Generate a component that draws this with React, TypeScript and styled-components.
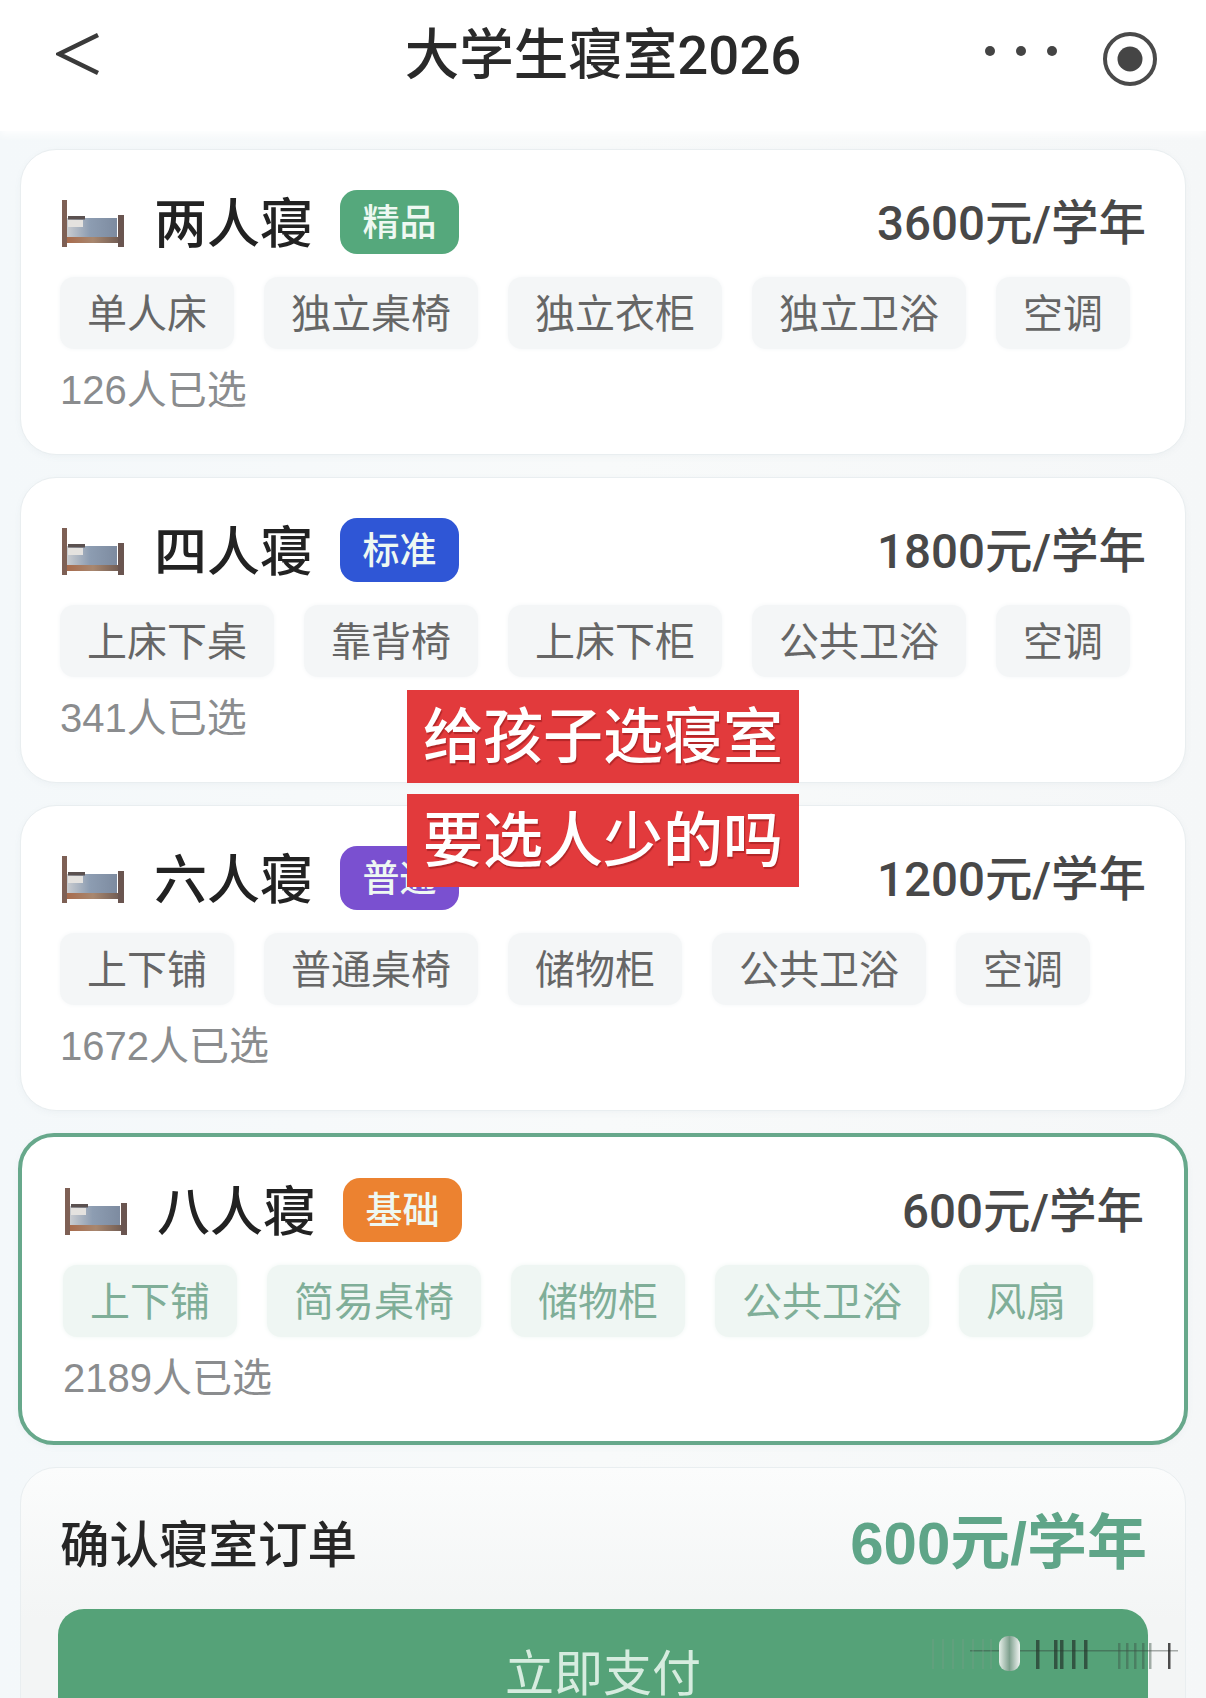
import React from "react";
import styled, { createGlobalStyle } from "styled-components";

const GlobalStyle = createGlobalStyle`
  html, body {
    margin: 0;
    padding: 0;
    background: #f6f9fa;
  }
  body {
    font-family: "Liberation Sans", "Noto Sans CJK SC", sans-serif;
  }
`;

type Room = {
  name: string;
  tag: string;
  tagColor: string;
  price: string;
  features: string[];
  count: string;
  selected?: boolean;
};

const rooms: Room[] = [
  {
    name: "两人寝",
    tag: "精品",
    tagColor: "#55a87c",
    price: "3600元/学年",
    features: ["单人床", "独立桌椅", "独立衣柜", "独立卫浴", "空调"],
    count: "126人已选",
  },
  {
    name: "四人寝",
    tag: "标准",
    tagColor: "#2f56d6",
    price: "1800元/学年",
    features: ["上床下桌", "靠背椅", "上床下柜", "公共卫浴", "空调"],
    count: "341人已选",
  },
  {
    name: "六人寝",
    tag: "普通",
    tagColor: "#7a50d0",
    price: "1200元/学年",
    features: ["上下铺", "普通桌椅", "储物柜", "公共卫浴", "空调"],
    count: "1672人已选",
  },
  {
    name: "八人寝",
    tag: "基础",
    tagColor: "#ec8230",
    price: "600元/学年",
    features: ["上下铺", "简易桌椅", "储物柜", "公共卫浴", "风扇"],
    count: "2189人已选",
    selected: true,
  },
];

const BedIcon = () => (
  <BedSvg viewBox="0 0 66 50" aria-hidden="true">
    <defs>
      <linearGradient id="mattress" x1="0" y1="0" x2="1" y2="0">
        <stop offset="0" stopColor="#c9ccd0" />
        <stop offset="0.45" stopColor="#8d9db2" />
        <stop offset="1" stopColor="#7d8ba0" />
      </linearGradient>
      <linearGradient id="frame" x1="0" y1="0" x2="1" y2="0">
        <stop offset="0" stopColor="#a8694a" />
        <stop offset="0.5" stopColor="#a8876f" />
        <stop offset="1" stopColor="#6e5a52" />
      </linearGradient>
    </defs>
    <rect x="7" y="20" width="50" height="21" fill="url(#mattress)" />
    <rect x="8" y="18" width="17" height="3.5" fill="#5b5150" />
    <rect x="8" y="22" width="15" height="7" fill="#e4e2df" />
    <rect x="5" y="39" width="56" height="6" fill="url(#frame)" />
    <rect x="2" y="2" width="5" height="47" fill="#7e6055" />
    <rect x="58" y="17" width="6" height="32" fill="#6a5550" />
  </BedSvg>
);

const RoomCard = ({ room }: { room: Room }) => (
  <Card $selected={room.selected}>
    <CardTop>
      <BedIcon />
      <RoomName>{room.name}</RoomName>
      <Tag $color={room.tagColor}>{room.tag}</Tag>
      <Price>{room.price}</Price>
    </CardTop>
    <Chips>
      {room.features.map((feature) => (
        <Chip key={feature} $selected={room.selected}>
          {feature}
        </Chip>
      ))}
    </Chips>
    <Count>{room.count}</Count>
  </Card>
);

const App = () => {
  return (
    <Page>
      <GlobalStyle />
      <Header>
        <BackIcon viewBox="0 0 44 44" aria-hidden="true">
          <path d="M42 2 L3 21 L42 40" />
        </BackIcon>
        <Title>大学生寝室2026</Title>
        <HeaderActions>
          <Dots>
            <Dot />
            <Dot />
            <Dot />
          </Dots>
          <RecordIcon viewBox="0 0 56 56" aria-hidden="true">
            <circle cx="28" cy="28" r="25" fill="none" stroke="#4a4a4a" strokeWidth="4" />
            <circle cx="28" cy="28" r="12.5" fill="#454545" />
          </RecordIcon>
        </HeaderActions>
      </Header>
      <List>
        {rooms.map((room) => (
          <RoomCard key={room.name} room={room} />
        ))}
        <OrderCard>
          <OrderRow>
            <OrderTitle>确认寝室订单</OrderTitle>
            <OrderPrice>600元/学年</OrderPrice>
          </OrderRow>
          <PayButton>立即支付</PayButton>
        </OrderCard>
      </List>
      <Caption>
        <CaptionLine>给孩子选寝室</CaptionLine>
        <CaptionLine>要选人少的吗</CaptionLine>
      </Caption>
      <Watermark viewBox="0 0 250 40" aria-hidden="true">
        <defs>
          <linearGradient id="pill" x1="0" y1="0" x2="1" y2="0">
            <stop offset="0" stopColor="#e6efe9" />
            <stop offset="0.5" stopColor="#7fa08e" />
            <stop offset="1" stopColor="#f0f4f2" />
          </linearGradient>
        </defs>
        <rect x="40" y="15" width="208" height="1.5" fill="#2f3a34" opacity="0.4" />
        {[2, 12, 22, 32, 42, 52, 60].map((x) => (
          <rect key={x} x={x} y="4" width="2" height="30" fill="#7f9a8a" opacity="0.3" />
        ))}
        <rect x="69" y="1" width="21" height="35" rx="9" fill="url(#pill)" />
        {[106, 124, 130, 142, 154].map((x) => (
          <rect key={x} x={x} y="5" width="3.5" height="29" fill="#24352b" opacity="0.7" />
        ))}
        {[188, 196, 204, 212, 219].map((x) => (
          <rect key={x} x={x} y="8" width="2.5" height="26" fill="#3f5548" opacity="0.45" />
        ))}
        <rect x="238" y="8" width="2.5" height="26" fill="#222" opacity="0.8" />
      </Watermark>
    </Page>
  );
};

export default App;

const Page = styled.div`
  position: relative;
  width: 1206px;
  height: 1698px;
  overflow: hidden;
  background: linear-gradient(90deg, #f4f8fa, #f8fafa 50%, #f5f7f8);
`;

const Header = styled.header`
  height: 131px;
  box-sizing: border-box;
  padding: 31px 48px 0 56px;
  background: #fff;
  box-shadow: 0 4px 8px rgba(255, 255, 255, 0.9);
  display: flex;
  align-items: flex-start;
  justify-content: space-between;
`;

const BackIcon = styled.svg`
  width: 44px;
  height: 44px;
  margin-top: 2px;
  fill: none;
  stroke: #3a3a3a;
  stroke-width: 4.5;
`;

const Title = styled.h1`
  position: absolute;
  left: 0;
  right: 0;
  top: 20px;
  margin: 0;
  text-align: center;
  font-family: Roboto, "Noto Sans CJK SC", sans-serif;
  font-size: 54.5px;
  line-height: 70px;
  font-weight: 500;
  color: #2a2a2a;
`;

const HeaderActions = styled.div`
  display: flex;
  align-items: flex-start;
  gap: 45px;
`;

const Dots = styled.div`
  display: flex;
  gap: 21px;
  margin-top: 15px;
`;

const Dot = styled.span`
  width: 10px;
  height: 10px;
  border-radius: 50%;
  background: #444;
`;

const RecordIcon = styled.svg`
  width: 56px;
  height: 56px;
`;

const List = styled.main`
  display: flex;
  flex-direction: column;
  gap: 22px;
  padding: 18px 20px 0 20px;
`;

const Card = styled.section<{ $selected?: boolean }>`
  height: ${(p) => (p.$selected ? 312 : 306)}px;
  box-sizing: border-box;
  margin: 0 ${(p) => (p.$selected ? "-2px" : "0")};
  padding: ${(p) => (p.$selected ? "41px 40px 0 41px" : "40px 39px 0 39px")};
  border: ${(p) => (p.$selected ? "4px solid #67a88b" : "1px solid #e9eef0")};
  border-radius: 36px;
  background: #fff;
  box-shadow: 0 2px 6px rgba(120, 140, 150, 0.06);
`;

const CardTop = styled.div`
  display: flex;
  align-items: center;
  height: 64px;
`;

const BedSvg = styled.svg`
  width: 66px;
  height: 50px;
  margin-top: 2px;
  flex: none;
  filter: blur(0.7px);
`;

const RoomName = styled.span`
  margin-left: 28px;
  padding-bottom: 5px;
  font-size: 53px;
  font-weight: 500;
  color: #222;
`;

const Tag = styled.span<{ $color: string }>`
  margin-left: 27px;
  width: 119px;
  height: 64px;
  border-radius: 17px;
  background: ${(p) => p.$color};
  color: #eef8f2;
  font-size: 37px;
  font-weight: 500;
  line-height: 68px;
  text-align: center;
`;

const Price = styled.span`
  margin-left: auto;
  padding-bottom: 5px;
  font-family: Roboto, "Noto Sans CJK SC", sans-serif;
  font-size: 47.5px;
  font-weight: 500;
  color: #484848;
`;

const Chips = styled.div`
  display: flex;
  gap: 30px;
  margin-top: 23px;
`;

const Chip = styled.span<{ $selected?: boolean }>`
  height: 72px;
  padding: 0 27px;
  border-radius: 14px;
  background: ${(p) => (p.$selected ? "#eff6f3" : "#f4f6f7")};
  box-shadow: 0 0 5px ${(p) => (p.$selected ? "#eff6f3" : "#f4f6f7")};
  color: ${(p) => (p.$selected ? "#7fae98" : "#666")};
  font-size: 40px;
  line-height: 74px;
`;

const Count = styled.div`
  margin-top: 16px;
  font-size: 40px;
  line-height: 50px;
  color: #8a8c8e;
`;

const OrderCard = styled.section`
  flex: 1;
  height: 400px;
  box-sizing: border-box;
  padding: 38px 37px 0;
  border: 1px solid #e9eef0;
  border-radius: 36px;
  background: linear-gradient(180deg, #fbfcfc, #f3f5f5 150px, #f3f5f5);
`;

const OrderRow = styled.div`
  display: flex;
  align-items: center;
  justify-content: space-between;
  height: 70px;
  padding: 0 1px 0 2px;
`;

const OrderTitle = styled.span`
  font-size: 49.5px;
  font-weight: 500;
  color: #262626;
`;

const OrderPrice = styled.span`
  padding-bottom: 8px;
  font-size: 60px;
  font-weight: 700;
  color: #5fa588;
`;

const PayButton = styled.button`
  display: block;
  width: 1090px;
  height: 200px;
  margin-top: 33px;
  padding: 0;
  padding-bottom: 80px;
  border: none;
  border-radius: 26px;
  background: #55a278;
  color: #d6ecdf;
  font-family: inherit;
  font-size: 49px;
`;

const Caption = styled.div`
  position: absolute;
  left: 407px;
  top: 690px;
  width: 392px;
  display: flex;
  flex-direction: column;
  gap: 11px;
`;

const CaptionLine = styled.div`
  height: 93px;
  background: #e23a3c;
  color: #fff;
  font-size: 60px;
  font-weight: 500;
  line-height: 96px;
  text-align: center;
  text-shadow: 1px 2px 1px rgba(90, 0, 0, 0.35);
`;

const Watermark = styled.svg`
  position: absolute;
  left: 930px;
  top: 1635px;
  width: 250px;
  height: 40px;
`;
